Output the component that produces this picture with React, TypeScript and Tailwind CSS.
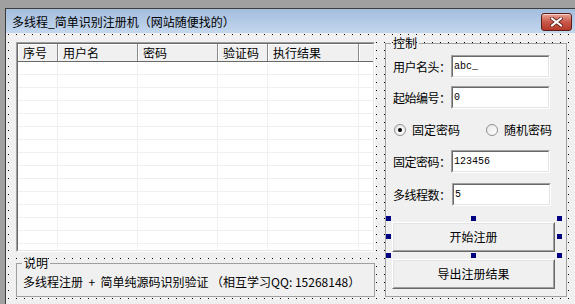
import React from 'react';

const columns = [
  { label: '序号', w: 40 },
  { label: '用户名', w: 80 },
  { label: '密码', w: 80 },
  { label: '验证码', w: 50 },
  { label: '执行结果', w: 91 },
];

const rows = Array.from({ length: 15 });

// sunken 3d frame (textbox / listview)
function Sunken({ className = '', children }: { className?: string; children?: React.ReactNode }) {
  return (
    <div className={`border border-t-[#a0a0a0] border-l-[#a0a0a0] border-r-white border-b-white ${className}`}>
      <div className="h-full w-full overflow-hidden border border-t-[#696969] border-l-[#696969] border-r-[#e3e3e3] border-b-[#e3e3e3] bg-white">
        {children}
      </div>
    </div>
  );
}

function Raised({ className = '', children }: { className?: string; children?: React.ReactNode }) {
  return (
    <div className={`border border-t-white border-l-white border-r-[#696969] border-b-[#696969] ${className}`}>
      <div className="flex h-full w-full items-center justify-center border border-t-[#e3e3e3] border-l-[#e3e3e3] border-r-[#a0a0a0] border-b-[#a0a0a0] bg-[#f0f0f0] text-[12px] text-black">
        {children}
      </div>
    </div>
  );
}

function Field({ label, value, shift = false }: { label: string; value: string; shift?: boolean }) {
  return (
    <div className="flex h-[23px] items-center">
      <span
        className={`${shift ? 'w-[59px]' : 'w-[58px]'} shrink-0 whitespace-nowrap tracking-[-0.5px] text-[12px] leading-[14px] text-black`}
      >
        {label}
      </span>
      <Sunken className="h-[23px] w-[99px] shrink-0">
        <div className="flex h-full items-center pl-[1px] font-['Liberation_Mono',monospace] text-[10px] text-black">
          {value}
        </div>
      </Sunken>
    </div>
  );
}

function Radio({ label, checked }: { label: string; checked?: boolean }) {
  return (
    <div className="flex items-center gap-[6px]">
      <span className="flex h-[12px] w-[12px] items-center justify-center rounded-full border border-[#8e8f8f] bg-gradient-to-br from-[#e6e6e6] to-white">
        {checked && <span className="h-[4px] w-[4px] rounded-full bg-black" />}
      </span>
      <span className="whitespace-nowrap text-[12px] leading-[14px] text-black">{label}</span>
    </div>
  );
}

function Handle({ className }: { className: string }) {
  return <span className={`absolute h-[5px] w-[5px] bg-[#000080] ${className}`} />;
}

export default function App() {
  return (
    <div className="h-[304px] w-[575px] overflow-hidden bg-[#a0a0a0] pl-[5px] pt-[8px] font-['Noto_Sans_CJK_SC','Liberation_Sans',sans-serif]">
      <div className="flex h-[296px] w-[570px] flex-col border-l border-t border-[#3c3c3c]">
        {/* title bar */}
        <div className="flex h-[24px] shrink-0 items-center justify-between bg-gradient-to-b from-[#a3bddd] to-[#c4d7ee] pl-[6px] pr-[3px]">
          <span className="pt-[2px] text-[12px] text-black">多线程_简单识别注册机（网站随便找的）</span>
          <div className="mt-[2px] flex h-[18px] w-[31px] items-center justify-center rounded-[3px] border border-[#5a1e17] bg-gradient-to-b from-[#e7a596] via-[#c9584a] to-[#b5392a] shadow-[inset_0_1px_0_rgba(255,255,255,0.5)]">
            <svg width="13" height="10" viewBox="0 0 13 10">
              <path d="M2 1.5 L11 8.5 M11 1.5 L2 8.5" stroke="#5b1f18" strokeWidth="3.6" strokeLinecap="square" />
              <path d="M2 1.5 L11 8.5 M11 1.5 L2 8.5" stroke="#ffffff" strokeWidth="2" strokeLinecap="square" />
            </svg>
          </div>
        </div>

        {/* client area with designer grid */}
        <div className="flex h-[272px] items-start gap-[10px] bg-[#f0f0f0] bg-[image:conic-gradient(at_1px_1px,transparent_270deg,#000_0)] bg-[size:8px_8px] bg-[position:2px_1px] pl-[10px] pt-[3px]">
          {/* left column */}
          <div className="mt-[6px] flex w-[359px] shrink-0 flex-col">
            <Sunken className="h-[210px] w-[359px]">
              <div className="flex h-[18px] border-b border-[#696969] bg-[#f0f0f0]">
                {columns.map((c) => (
                  <div
                    key={c.label}
                    style={{ width: c.w }}
                    className="flex shrink-0 items-center border-r border-[#8a8a8a] pl-[5px] text-[12px] leading-[14px] text-black shadow-[inset_1px_1px_0_#fff]"
                  >
                    {c.label}
                  </div>
                ))}
                <div className="flex-1 shadow-[inset_1px_1px_0_#fff]" />
              </div>
              {rows.map((_, i) => (
                <div key={i} className="flex h-[13px] border-b border-[#f0f0f0]">
                  {columns.map((c) => (
                    <div key={c.label} style={{ width: c.w }} className="shrink-0 border-r border-[#f0f0f0]" />
                  ))}
                </div>
              ))}
            </Sunken>

            <fieldset className="mt-[4px] h-[41px] w-[359px] border border-[#a0a0a0] bg-[#f0f0f0] pl-[6px]">
              <legend className="ml-[-1px] px-[2px] text-[12px] leading-[14px] text-black">说明</legend>
              <div className="mt-[5px] whitespace-pre text-[12px] leading-[14px] text-black">
                {'多线程注册  +  简单纯源码识别验证 （相互学习QQ: 15268148）'}
              </div>
            </fieldset>
          </div>

          {/* control group */}
          <fieldset className="h-[261px] w-[182px] shrink-0 border border-[#a0a0a0] bg-[#f0f0f0] pl-[7px]">
            <legend className="ml-[-2px] px-[2px] text-[12px] leading-[14px] text-black">控制</legend>
            <div className="flex flex-col">
              <div className="mt-[5px]">
                <Field label="用户名头：" value="abc_" />
              </div>
              <div className="mt-[8px]">
                <Field label="起始编号：" value="0" />
              </div>
              <div className="mt-[14px] flex h-[14px] items-center gap-[26px] pl-[1px]">
                <Radio label="固定密码" checked />
                <Radio label="随机密码" />
              </div>
              <div className="mt-[13px]">
                <Field label="固定密码：" value="123456" />
              </div>
              <div className="mt-[10px]">
                <Field label="多线程数：" value="5" shift />
              </div>
              <div className="relative ml-[-1px] mt-[16px] h-[30px] w-[163px]">
                <Raised className="h-[30px] w-[163px]">开始注册</Raised>
                <Handle className="left-[-6px] top-[-6px]" />
                <Handle className="left-[79px] top-[-6px]" />
                <Handle className="left-[165px] top-[-6px]" />
                <Handle className="left-[-6px] top-[12px]" />
                <Handle className="left-[165px] top-[12px]" />
                <Handle className="left-[-6px] top-[31px]" />
                <Handle className="left-[79px] top-[31px]" />
                <Handle className="left-[165px] top-[31px]" />
              </div>
              <Raised className="ml-[-1px] mt-[7px] h-[30px] w-[163px]">导出注册结果</Raised>
            </div>
          </fieldset>
        </div>
      </div>
    </div>
  );
}
